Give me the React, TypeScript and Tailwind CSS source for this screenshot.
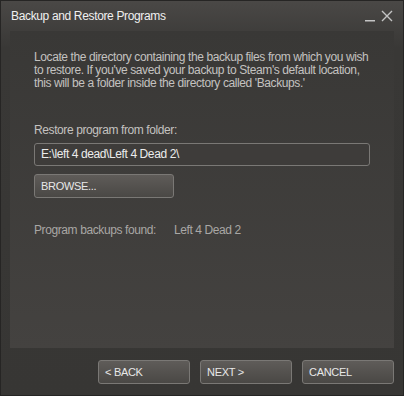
const font = { fontFamily: '"Liberation Sans", Arial, sans-serif' };

function SteamButton({
  children,
  className = "",
}: {
  children: React.ReactNode;
  className?: string;
}) {
  return (
    <button
      className={`h-[24px] rounded-[3px] border border-[#7a7875] bg-gradient-to-b from-[#5f5c59] to-[#4a4845] pl-[6px] text-left text-[11px] text-[#e8e8e8] ${className}`}
    >
      {children}
    </button>
  );
}

export default function App() {
  return (
    <div
      style={font}
      className="flex h-[396px] w-[404px] flex-col border border-[#262524] bg-gradient-to-b from-[#4a4846] via-[#393836] via-[12%] to-[#373634]"
    >
      <div className="flex h-[30px] items-center justify-between pl-[10px] pr-[10px]">
        <span className="text-[12px] tracking-[-0.35px] text-[#f0f0f0]">Backup and Restore Programs</span>
        <div className="flex items-center gap-[6px] text-[#c4c4c4]">
          <svg width="10" height="12" viewBox="0 0 10 12">
            <rect x="0" y="10" width="10" height="1.5" fill="currentColor" />
          </svg>
          <svg width="12" height="12" viewBox="0 0 12 12">
            <path d="M1 1 L11 11 M11 1 L1 11" stroke="currentColor" strokeWidth="1.4" />
          </svg>
        </div>
      </div>

      <div className="mx-[9px] flex h-[317px] flex-col bg-gradient-to-b from-[#393836] to-[#444240] px-[24px] pt-[20px] text-[12px] leading-[13px] tracking-[-0.4px]">
        <p className="whitespace-nowrap text-[#c4c2c0]">
          Locate the directory containing the backup files from which you wish
          <br />
          to restore. If you've saved your backup to Steam's default location,
          <br />
          this will be a folder inside the directory called 'Backups.'
        </p>

        <p className="mt-[34px] text-[#c4c2c0]">Restore program from folder:</p>
        <div className="mt-[6px] flex h-[23px] w-[336px] items-center rounded-[3px] border border-[#7a7875] bg-[#3e3c3a] pl-[6px] text-[#ececec]">
          E:\left 4 dead\Left 4 Dead 2\
        </div>
        <SteamButton className="mt-[8px] w-[140px] tracking-[-0.3px]">BROWSE...</SteamButton>

        <div className="mt-[26px] flex text-[#a9a7a5]">
          <span className="w-[140px]">Program backups found:</span>
          <span>Left 4 Dead 2</span>
        </div>
      </div>

      <div className="mt-[12px] flex justify-end gap-[10px] pr-[9px] tracking-[-0.3px]">
        <SteamButton className="w-[92px]">&lt; BACK</SteamButton>
        <SteamButton className="w-[92px]">NEXT &gt;</SteamButton>
        <SteamButton className="w-[92px]">CANCEL</SteamButton>
      </div>
    </div>
  );
}
